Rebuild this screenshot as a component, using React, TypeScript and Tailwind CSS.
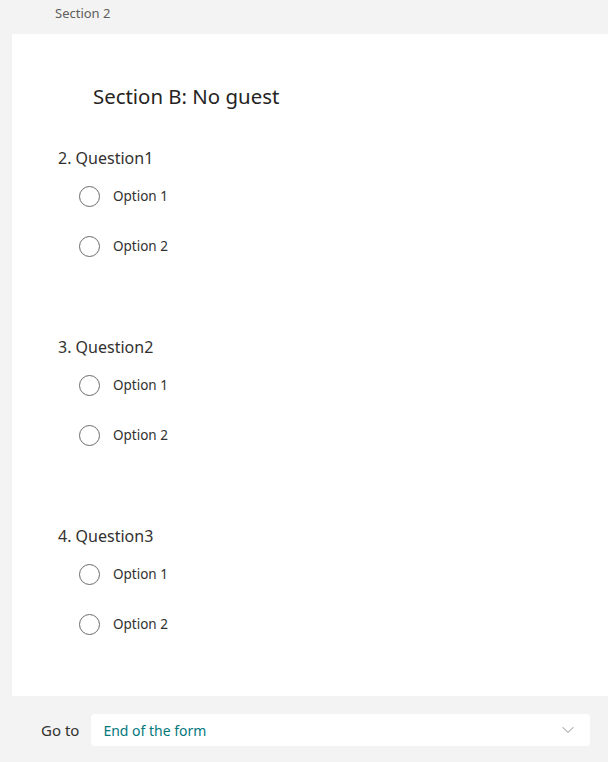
import { ChevronDown } from 'lucide-react';

const questions = [
  { id: 2, title: 'Question1', options: ['Option 1', 'Option 2'] },
  { id: 3, title: 'Question2', options: ['Option 1', 'Option 2'] },
  { id: 4, title: 'Question3', options: ['Option 1', 'Option 2'] }
];

export default function App() {
  return (
    <div
      className="w-[608px] h-[762px] bg-[#f3f3f3] overflow-hidden flex flex-col"
      style={{ fontFamily: '"Noto Sans", "Open Sans", sans-serif' }}
    >
      {/* Section label */}
      <div className="h-[34px] pl-[55px] pb-[6px] flex items-center text-[13px] text-[#605e5c]">
        Section 2
      </div>

      {/* Card */}
      <div className="ml-[12px] h-[662px] bg-white pt-[47px]">
        <h1 className="pl-[81px] text-[20.4px] leading-[30px] text-[#252423]">
          Section B: No guest
        </h1>

        <div className="mt-[35px] flex flex-col gap-[64px]">
          {questions.map(q => (
            <div key={q.id} className="pl-[46px]">
              <div className="text-[16px] leading-[24px] text-[#323130]">
                {q.id}. {q.title}
              </div>
              <div className="mt-px flex flex-col">
                {q.options.map(opt => (
                  <label key={opt} className="h-[50px] flex items-center pl-[21px] gap-[13px]">
                    <span className="w-[21px] h-[21px] rounded-full border border-[#6b6b6b] bg-white" />
                    <span className="text-[13.5px] text-[#323130]">{opt}</span>
                  </label>
                ))}
              </div>
            </div>
          ))}
        </div>
      </div>

      {/* Go to */}
      <div className="flex items-center pt-[18px] pl-[41px] pr-[18px] gap-[12px]">
        <span className="text-[15px] text-[#323130]">Go to</span>
        <div className="flex-1 h-[32px] bg-white rounded-[4px] flex items-center justify-between pl-[12px] pr-[12px]">
          <span className="text-[14px] text-[#03787c]">End of the form</span>
          <ChevronDown className="w-[20px] h-[20px] text-[#797775]" strokeWidth={1} />
        </div>
      </div>
    </div>
  );
}
